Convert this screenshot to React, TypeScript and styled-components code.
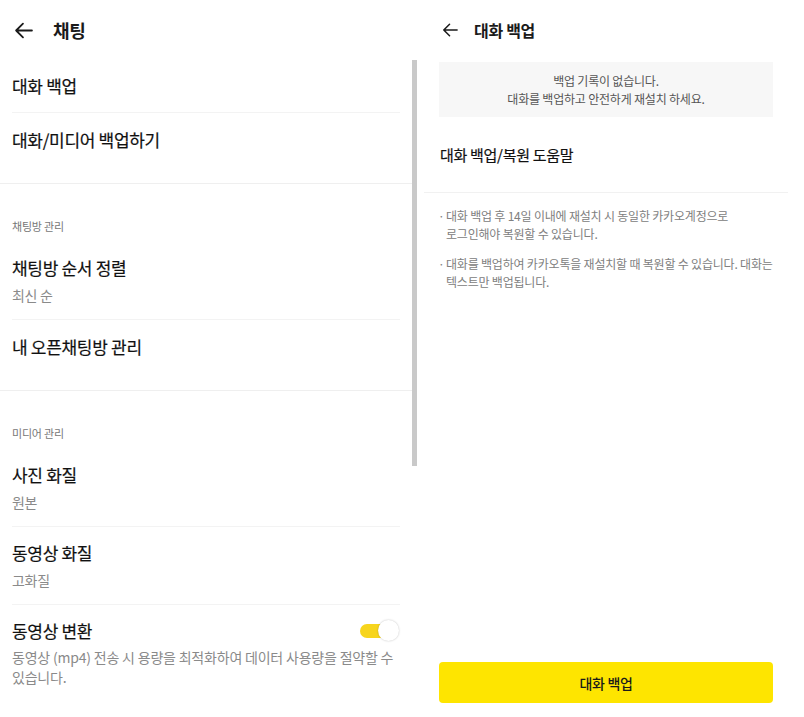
import styled, { createGlobalStyle } from "styled-components";

const GlobalStyle = createGlobalStyle`
  html, body {
    margin: 0;
    padding: 0;
    background: #ffffff;
  }
  body {
    font-family: "Noto Sans CJK KR", "Noto Sans", sans-serif;
    color: #1e1e1e;
    word-break: keep-all;
  }
`;

const Screen = styled.div`
  display: flex;
  width: 804px;
  height: 717px;
  overflow: hidden;
  background: #fff;
`;

const LeftPanel = styled.div`
  display: flex;
  flex-direction: column;
  width: 420px;
  flex-shrink: 0;
`;

const Header = styled.div<{ $compact?: boolean }>`
  display: flex;
  align-items: center;
  gap: ${(p) => (p.$compact ? "16px" : "20px")};
  height: 60px;
  padding-left: ${(p) => (p.$compact ? "18px" : "14px")};
  box-sizing: border-box;
  flex-shrink: 0;
`;

const Title = styled.h1<{ $size: number }>`
  margin: 0;
  font-size: ${(p) => p.$size}px;
  font-weight: 700;
  letter-spacing: -0.3px;
  color: #1a1a1a;
`;

const ScrollArea = styled.div`
  display: flex;
  flex: 1;
`;

const List = styled.div`
  width: 412px;
  display: flex;
  flex-direction: column;
`;

const ScrollTrack = styled.div`
  width: 5px;
`;

const ScrollThumb = styled.div`
  width: 5px;
  height: 406px;
  background: #c9c9c9;
`;

const Section = styled.section<{ $last?: boolean }>`
  padding-bottom: ${(p) => (p.$last ? "0" : "17px")};
  border-bottom: ${(p) => (p.$last ? "none" : "1px solid #efefef")};
`;

const SectionLabel = styled.div`
  padding: 34px 12px 8px;
  font-size: 11px;
  line-height: 16px;
  color: #777;
  letter-spacing: -0.2px;
`;

const Item = styled.div<{ $divider?: boolean }>`
  display: flex;
  align-items: center;
  justify-content: space-between;
  margin: 0 12px;
  min-height: 53px;
  padding: 14px 0;
  box-sizing: border-box;
  border-bottom: ${(p) => (p.$divider ? "1px solid #f3f3f3" : "none")};
`;

const ItemText = styled.div`
  display: flex;
  flex-direction: column;
  gap: 5px;
  flex: 1;
`;

const ItemTitle = styled.div`
  font-size: 17px;
  line-height: 24px;
  font-weight: 400;
  color: #111;
  letter-spacing: -0.3px;
  -webkit-text-stroke: 0.2px #111;
`;

const ItemSub = styled.div`
  font-size: 14px;
  line-height: 20px;
  color: #8a8a8a;
  letter-spacing: -0.3px;
`;

const ToggleItem = styled.div`
  margin: 0 12px;
  padding-top: 14px;
`;

const ToggleRow = styled.div`
  display: flex;
  align-items: center;
  justify-content: space-between;
`;

const Desc = styled.p`
  margin: 4px 0 0;
  font-size: 14px;
  line-height: 20px;
  color: #8a8a8a;
  letter-spacing: -0.2px;
  padding-right: 6px;
`;

const Toggle = styled.div`
  position: relative;
  width: 39px;
  height: 22px;
  margin-right: 1px;
`;

const ToggleTrack = styled.div`
  position: absolute;
  left: 0;
  top: 4px;
  width: 28px;
  height: 14px;
  border-radius: 7px;
  background: #f7d51d;
`;

const ToggleKnob = styled.div`
  position: absolute;
  right: 0;
  top: 0;
  width: 21px;
  height: 21px;
  border-radius: 50%;
  background: #fff;
  box-shadow: 0 0 2px rgba(0, 0, 0, 0.25);
`;

const RightPanel = styled.div`
  display: flex;
  flex-direction: column;
  width: 364px;
  margin-left: 4px;
`;

const Body = styled.div`
  flex: 1;
  display: flex;
  flex-direction: column;
`;

const Notice = styled.div`
  margin: 2px 15px 0;
  height: 55px;
  background: #f7f7f7;
  display: flex;
  flex-direction: column;
  align-items: center;
  justify-content: center;
  font-size: 12px;
  line-height: 18px;
  color: #555;
  letter-spacing: -0.2px;
`;

const HelpLink = styled.div`
  padding: 0 16px;
  height: 75px;
  display: flex;
  align-items: center;
  font-size: 15px;
  font-weight: 400;
  letter-spacing: -0.3px;
  color: #111;
  -webkit-text-stroke: 0.2px #111;
  border-bottom: 1px solid #f1f1f1;
`;

const Bullets = styled.ul`
  list-style: none;
  margin: 0;
  padding: 14px 8px 0 14px;
  display: flex;
  flex-direction: column;
  gap: 12px;
`;

const Bullet = styled.li`
  display: flex;
  font-size: 12px;
  line-height: 18px;
  color: #808080;
  letter-spacing: -0.2px;

  &::before {
    content: "·";
    width: 8px;
    flex-shrink: 0;
  }
`;

const PrimaryButton = styled.button`
  margin: 0 15px 14px;
  height: 41px;
  border: none;
  border-radius: 4px;
  background: #fee500;
  font-family: inherit;
  font-size: 14px;
  font-weight: 500;
  color: #1a1a1a;
  letter-spacing: -0.3px;
`;

function BackArrow({ size }: { size: number }) {
  return (
    <svg width={size} height={size} viewBox="0 0 18 18" fill="none">
      <path
        d="M17 9H2M8.5 2.5L2 9l6.5 6.5"
        stroke="#1a1a1a"
        strokeWidth={1.7}
        strokeLinecap="round"
        strokeLinejoin="round"
      />
    </svg>
  );
}

export default function App() {
  return (
    <Screen>
      <GlobalStyle />
      <LeftPanel>
        <Header>
          <BackArrow size={19} />
          <Title $size={18}>채팅</Title>
        </Header>
        <ScrollArea>
          <List>
            <Section>
              <Item $divider>
                <ItemTitle>대화 백업</ItemTitle>
              </Item>
              <Item>
                <ItemTitle>대화/미디어 백업하기</ItemTitle>
              </Item>
            </Section>
            <Section>
              <SectionLabel>채팅방 관리</SectionLabel>
              <Item $divider>
                <ItemText>
                  <ItemTitle>채팅방 순서 정렬</ItemTitle>
                  <ItemSub>최신 순</ItemSub>
                </ItemText>
              </Item>
              <Item>
                <ItemTitle>내 오픈채팅방 관리</ItemTitle>
              </Item>
            </Section>
            <Section $last>
              <SectionLabel>미디어 관리</SectionLabel>
              <Item $divider>
                <ItemText>
                  <ItemTitle>사진 화질</ItemTitle>
                  <ItemSub>원본</ItemSub>
                </ItemText>
              </Item>
              <Item $divider>
                <ItemText>
                  <ItemTitle>동영상 화질</ItemTitle>
                  <ItemSub>고화질</ItemSub>
                </ItemText>
              </Item>
              <ToggleItem>
                <ToggleRow>
                  <ItemTitle>동영상 변환</ItemTitle>
                  <Toggle>
                    <ToggleTrack />
                    <ToggleKnob />
                  </Toggle>
                </ToggleRow>
                <Desc>
                  동영상 (mp4) 전송 시 용량을 최적화하여 데이터 사용량을 절약할 수
                  있습니다.
                </Desc>
              </ToggleItem>
            </Section>
          </List>
          <ScrollTrack>
            <ScrollThumb />
          </ScrollTrack>
        </ScrollArea>
      </LeftPanel>

      <RightPanel>
        <Header $compact>
          <BackArrow size={16} />
          <Title $size={16}>대화 백업</Title>
        </Header>
        <Body>
          <Notice>
            <span>백업 기록이 없습니다.</span>
            <span>대화를 백업하고 안전하게 재설치 하세요.</span>
          </Notice>
          <HelpLink>대화 백업/복원 도움말</HelpLink>
          <Bullets>
            <Bullet>대화 백업 후 14일 이내에 재설치 시 동일한 카카오계정으로 로그인해야 복원할 수 있습니다.</Bullet>
            <Bullet>대화를 백업하여 카카오톡을 재설치할 때 복원할 수 있습니다. 대화는 텍스트만 백업됩니다.</Bullet>
          </Bullets>
        </Body>
        <PrimaryButton>대화 백업</PrimaryButton>
      </RightPanel>
    </Screen>
  );
}
